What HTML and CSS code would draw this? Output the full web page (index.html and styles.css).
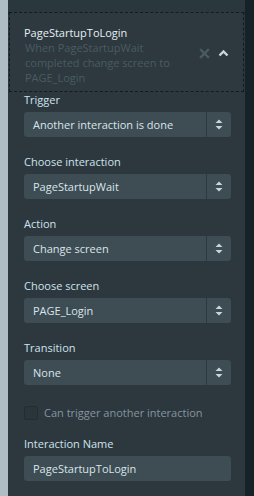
FILE: index.html
```html
<!DOCTYPE html>
<html lang="en">
<head>
  <meta charset="UTF-8">
  <title>Interaction</title>
  <link rel="stylesheet" href="styles.css">
</head>
<body>
  <div class="layout">
    <div class="rail"></div>
    <div class="panel">
      <div class="panel-top"></div>
      <div class="interaction">
        <div class="interaction-text">
          <div class="interaction-title">PageStartupToLogin</div>
          <div class="interaction-desc">When PageStartupWait completed change screen to PAGE_Login</div>
        </div>
        <div class="interaction-tools">
          <svg width="11" height="11" viewBox="0 0 11 11"><path d="M2 2 L9 9 M9 2 L2 9" stroke="#4a5b62" stroke-width="2.4" stroke-linecap="square"/></svg>
          <svg width="11" height="8" viewBox="0 0 11 8"><path d="M1.5 6.5 L5.5 2.5 L9.5 6.5" fill="none" stroke="#c9d5db" stroke-width="2.4"/></svg>
        </div>
      </div>

      <div class="form">
        <label class="field-label">Trigger</label>
        <div class="select">
          <span class="select-value">Another interaction is done</span>
          <span class="select-arrow"><svg width="8" height="11" viewBox="0 0 8 11"><path d="M4 0.5 L7.5 4 L0.5 4 Z M4 10.5 L7.5 7 L0.5 7 Z" fill="#c9d5db"/></svg></span>
        </div>

        <label class="field-label">Choose interaction</label>
        <div class="select">
          <span class="select-value">PageStartupWait</span>
          <span class="select-arrow"><svg width="8" height="11" viewBox="0 0 8 11"><path d="M4 0.5 L7.5 4 L0.5 4 Z M4 10.5 L7.5 7 L0.5 7 Z" fill="#c9d5db"/></svg></span>
        </div>

        <label class="field-label">Action</label>
        <div class="select">
          <span class="select-value">Change screen</span>
          <span class="select-arrow"><svg width="8" height="11" viewBox="0 0 8 11"><path d="M4 0.5 L7.5 4 L0.5 4 Z M4 10.5 L7.5 7 L0.5 7 Z" fill="#c9d5db"/></svg></span>
        </div>

        <label class="field-label">Choose screen</label>
        <div class="select">
          <span class="select-value">PAGE_Login</span>
          <span class="select-arrow"><svg width="8" height="11" viewBox="0 0 8 11"><path d="M4 0.5 L7.5 4 L0.5 4 Z M4 10.5 L7.5 7 L0.5 7 Z" fill="#c9d5db"/></svg></span>
        </div>

        <label class="field-label">Transition</label>
        <div class="select">
          <span class="select-value">None</span>
          <span class="select-arrow"><svg width="8" height="11" viewBox="0 0 8 11"><path d="M4 0.5 L7.5 4 L0.5 4 Z M4 10.5 L7.5 7 L0.5 7 Z" fill="#c9d5db"/></svg></span>
        </div>

        <div class="check">
          <span class="check-box"></span>
          <span class="check-label">Can trigger another interaction</span>
        </div>

        <label class="field-label">Interaction Name</label>
        <div class="input">PageStartupToLogin</div>
      </div>
    </div>
    <div class="edge"></div>
  </div>
</body>
</html>
```

FILE: styles.css
```css
:root {
  --panel: #2c383e;
  --field: #3e4c53;
  --label: #cfe2ec;
  --value: #d9e5eb;
  --muted: #4b5b61;
}

* {
  margin: 0;
  padding: 0;
  box-sizing: border-box;
}

body {
  width: 254px;
  height: 496px;
  overflow: hidden;
  font-family: "Open Sans", "Noto Sans", sans-serif;
  font-size: 11px;
  background-color: var(--panel);
}

.layout {
  display: flex;
  height: 496px;
}

.rail {
  width: 8px;
  background-color: #aebcc3;
}

.edge {
  width: 9px;
  background-color: #152228;
}

.panel {
  flex: 1;
  background-color: var(--panel);
}

.panel-top {
  height: 14px;
  background-color: #2a373d;
  border-bottom: 2px solid #1f2b30;
}

.interaction {
  display: flex;
  align-items: center;
  margin: -2px 1px 0 1px;
  height: 80px;
  padding: 0 14px;
  border: 1px dashed #121c20;
  background-color: #2d393f;
}

.interaction-text {
  flex: 1;
  padding-top: 6px;
}

.interaction-title {
  color: #e6eff4;
  line-height: 15px;
}

.interaction-desc {
  color: var(--muted);
  line-height: 15px;
  width: 150px;
  padding-left: 1px;
}

.interaction-tools {
  display: flex;
  align-items: center;
  gap: 8px;
  padding-top: 2px;
}

.form {
  padding: 0 14px 0 16px;
}

.field-label {
  display: block;
  color: var(--label);
  line-height: 15px;
  margin-bottom: 5px;
}

.select,
.input {
  display: flex;
  align-items: center;
  height: 25px;
  background-color: var(--field);
  border-radius: 3px;
  color: var(--value);
  margin-bottom: 17px;
}

.select-value {
  flex: 1;
  padding-left: 9px;
}

.select-arrow {
  width: 25px;
  height: 25px;
  display: flex;
  align-items: center;
  justify-content: center;
  border-left: 1px solid #2c393f;
}

.input {
  padding-left: 9px;
}

.check {
  display: flex;
  align-items: center;
  gap: 6px;
  margin-top: 20px;
  margin-bottom: 16px;
}

.check-box {
  width: 14px;
  height: 14px;
  border: 1px solid #222d32;
  border-radius: 2px;
  background-color: #29353a;
}

.check-label {
  color: #8595a0;
}
```
